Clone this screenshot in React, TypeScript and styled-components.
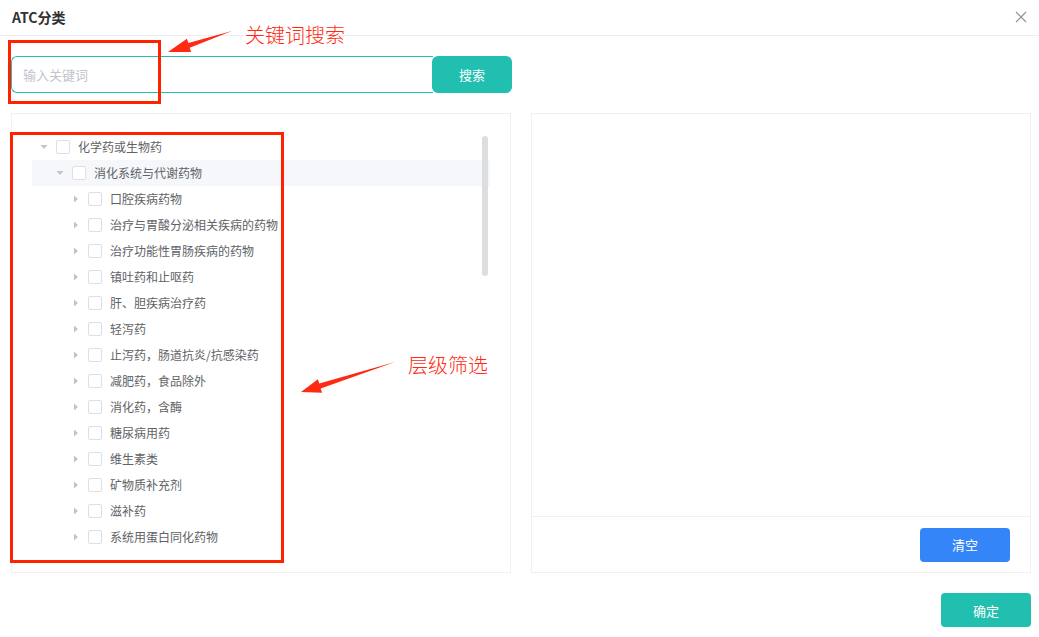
import React, { useState } from 'react';
import styled, { createGlobalStyle } from 'styled-components';

interface TreeNode {
  label: string;
  level: number;
  expanded?: boolean;
}

const treeData: TreeNode[] = [
  { label: '化学药或生物药', level: 0, expanded: true },
  { label: '消化系统与代谢药物', level: 1, expanded: true },
  { label: '口腔疾病药物', level: 2 },
  { label: '治疗与胃酸分泌相关疾病的药物', level: 2 },
  { label: '治疗功能性胃肠疾病的药物', level: 2 },
  { label: '镇吐药和止呕药', level: 2 },
  { label: '肝、胆疾病治疗药', level: 2 },
  { label: '轻泻药', level: 2 },
  { label: '止泻药，肠道抗炎/抗感染药', level: 2 },
  { label: '减肥药，食品除外', level: 2 },
  { label: '消化药，含酶', level: 2 },
  { label: '糖尿病用药', level: 2 },
  { label: '维生素类', level: 2 },
  { label: '矿物质补充剂', level: 2 },
  { label: '滋补药', level: 2 },
  { label: '系统用蛋白同化药物', level: 2 },
];

const App: React.FC = () => {
  const [keyword, setKeyword] = useState('');
  const [checked, setChecked] = useState<Record<number, boolean>>({});

  return (
    <>
      <GlobalStyle />
      <Dialog>
        {/* 头部 */}
        <Header>
          <Title>ATC分类</Title>
          <CloseButton aria-label="close">
            <svg width="12" height="12" viewBox="0 0 12 12">
              <path d="M1 1L11 11M11 1L1 11" stroke="#909399" strokeWidth="1.2" />
            </svg>
          </CloseButton>
        </Header>

        <Body>
          {/* 搜索栏 */}
          <SearchRow>
            <SearchInput
              placeholder="输入关键词"
              value={keyword}
              onChange={(e) => setKeyword(e.target.value)}
            />
            <SearchButton>搜索</SearchButton>
          </SearchRow>

          {/* 左右面板 */}
          <Panels>
            <Panel>
              <TreeWrap>
                {treeData.map((node, index) => (
                  <TreeRow key={index} $level={node.level} $active={index === 1}>
                    <Caret $expanded={!!node.expanded}>
                      <svg width="10" height="10" viewBox="0 0 10 10">
                        <path d="M3 1.5L7 5L3 8.5Z" fill="#c0c4cc" />
                      </svg>
                    </Caret>
                    <CheckBox
                      $checked={!!checked[index]}
                      onClick={() => setChecked({ ...checked, [index]: !checked[index] })}
                    />
                    <NodeLabel>{node.label}</NodeLabel>
                  </TreeRow>
                ))}
              </TreeWrap>
              <ScrollThumb />
            </Panel>

            <Panel>
              <SelectedArea />
              <PanelFooter>
                <ClearButton>清空</ClearButton>
              </PanelFooter>
            </Panel>
          </Panels>

          <DialogFooter>
            <ConfirmButton>确定</ConfirmButton>
          </DialogFooter>
        </Body>

        {/* 标注 */}
        <MarkBox $x={8} $y={40} $w={153} $h={64} />
        <MarkBox $x={10} $y={132} $w={274} $h={431} />
        <ArrowLayer width="1039" height="637" viewBox="0 0 1039 637">
          <polygon
            points="168,52 191.1,52.1 189.7,47.8 232,31 188.3,43 186.9,38.7"
            fill="#ff2a12"
          />
          <polygon
            points="301,392 322.1,392.7 320.7,388.4 395,362 319.3,383.6 317.9,379.3"
            fill="#ff2a12"
          />
        </ArrowLayer>
        <MarkText $x={245} $y={22}>关键词搜索</MarkText>
        <MarkText $x={408} $y={352}>层级筛选</MarkText>
      </Dialog>
    </>
  );
};

export default App;

const GlobalStyle = createGlobalStyle`
  html, body {
    margin: 0;
    padding: 0;
    background: #fff;
  }
  body {
    font-family: "Noto Sans CJK SC", "Noto Sans", "Liberation Sans", sans-serif;
  }
  * {
    box-sizing: border-box;
  }
`;

const Dialog = styled.div`
  position: relative;
  width: 1039px;
  height: 637px;
  background: #fff;
  overflow: hidden;
`;

const Header = styled.div`
  height: 36px;
  display: flex;
  align-items: center;
  justify-content: space-between;
  padding: 0 11px 2px 12px;
  border-bottom: 1px solid #ebeef5;
`;

const Title = styled.h1`
  margin: 0;
  font-size: 14px;
  font-weight: 700;
  color: #303133;
  line-height: 20px;
`;

const CloseButton = styled.button`
  display: flex;
  align-items: center;
  justify-content: center;
  width: 14px;
  height: 14px;
  padding: 0;
  border: none;
  background: none;
  cursor: pointer;
`;

const Body = styled.div`
  padding: 20px 8px 0 11px;
`;

const SearchRow = styled.div`
  display: flex;
  height: 37px;
  width: 501px;
`;

const SearchInput = styled.input`
  flex: 1;
  height: 37px;
  border: 1px solid #20bfb0;
  border-right: none;
  border-radius: 6px 0 0 6px;
  padding: 0 11px;
  font-size: 13px;
  font-family: inherit;
  color: #606266;
  outline: none;

  &::placeholder {
    color: #c0c4cc;
  }
`;

const SearchButton = styled.button`
  width: 80px;
  height: 37px;
  border: none;
  border-radius: 6px;
  margin-left: -1px;
  background: #20bfb0;
  color: #fff;
  font-size: 13px;
  font-family: inherit;
  cursor: pointer;
`;

const Panels = styled.div`
  display: grid;
  grid-template-columns: 500px 500px;
  gap: 20px;
  margin-top: 20px;
  height: 460px;
`;

const Panel = styled.div`
  position: relative;
  display: flex;
  flex-direction: column;
  border: 1px solid #f0f0f0;
  overflow: hidden;
`;

const TreeWrap = styled.div`
  flex: 1;
  padding: 20px 20px 0 20px;
  overflow: hidden;
`;

const TreeRow = styled.div<{ $level: number; $active: boolean }>`
  height: 26px;
  display: flex;
  align-items: center;
  padding-left: ${(p) => p.$level * 16}px;
  background: ${(p) => (p.$active ? '#f5f7fa' : 'transparent')};
  cursor: pointer;
`;

const Caret = styled.span<{ $expanded: boolean }>`
  width: 24px;
  height: 24px;
  display: flex;
  align-items: center;
  justify-content: center;
  transform: rotate(${(p) => (p.$expanded ? 90 : 0)}deg);
`;

const CheckBox = styled.span<{ $checked: boolean }>`
  width: 14px;
  height: 14px;
  border: 1px solid #dcdfe6;
  border-radius: 2px;
  background: ${(p) => (p.$checked ? '#20bfb0' : '#fff')};
  flex-shrink: 0;
`;

const NodeLabel = styled.span`
  margin-left: 8px;
  font-size: 12px;
  color: #606266;
  line-height: 26px;
  white-space: nowrap;
`;

const ScrollThumb = styled.div`
  position: absolute;
  top: 22px;
  left: 470px;
  width: 6px;
  height: 140px;
  border-radius: 3px;
  background: #dddee0;
`;

const SelectedArea = styled.div`
  flex: 1;
`;

const PanelFooter = styled.div`
  height: 56px;
  border-top: 1px solid #f0f0f0;
  display: flex;
  align-items: center;
  justify-content: flex-end;
  padding: 0 20px 0 0;
`;

const ClearButton = styled.button`
  width: 90px;
  height: 34px;
  border: none;
  border-radius: 4px;
  background: #3485f7;
  color: #fff;
  font-size: 13px;
  font-family: inherit;
  cursor: pointer;
`;

const DialogFooter = styled.div`
  display: flex;
  justify-content: flex-end;
  margin-top: 20px;
`;

const ConfirmButton = styled.button`
  width: 90px;
  height: 34px;
  border: none;
  border-radius: 4px;
  background: #20bfb0;
  color: #fff;
  font-size: 13px;
  font-family: inherit;
  cursor: pointer;
`;

// 标注层
const MarkBox = styled.div<{ $x: number; $y: number; $w: number; $h: number }>`
  position: absolute;
  left: ${(p) => p.$x}px;
  top: ${(p) => p.$y}px;
  width: ${(p) => p.$w}px;
  height: ${(p) => p.$h}px;
  border: 3px solid #ff2200;
  pointer-events: none;
`;

const ArrowLayer = styled.svg`
  position: absolute;
  left: 0;
  top: 0;
  pointer-events: none;
`;

const MarkText = styled.div<{ $x: number; $y: number }>`
  position: absolute;
  left: ${(p) => p.$x}px;
  top: ${(p) => p.$y}px;
  font-size: 20px;
  font-weight: 300;
  line-height: 26px;
  color: #ff2a12;
  pointer-events: none;
`;
